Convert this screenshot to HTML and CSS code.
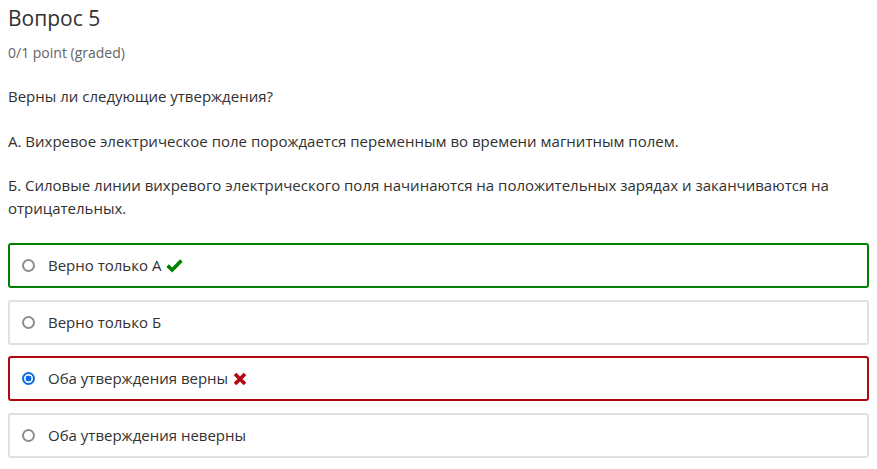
FILE: index.html
```html
<!DOCTYPE html>
<html lang="ru">
<head>
    <meta charset="UTF-8">
    <title>Вопрос 5</title>
    <link rel="stylesheet" href="styles.css">
</head>
<body>
    <div class="problem">
        <h3 class="problem-title">Вопрос 5</h3>
        <div class="problem-progress">0/1 point (graded)</div>

        <p>Верны ли следующие утверждения?</p>
        <p>А. Вихревое электрическое поле порождается переменным во времени магнитным полем.</p>
        <p>Б. Силовые линии вихревого электрического поля начинаются на положительных зарядах и заканчиваются на отрицательных.</p>

        <div class="choices">
            <label class="choice choice-correct">
                <input type="radio" name="q5">
                <span>Верно только А</span>
                <svg class="mark" width="17" height="15" viewBox="0 0 17 15"><path d="M1.6 7.6 L6.2 12 L15.4 2.4" fill="none" stroke="#008100" stroke-width="3.6"/></svg>
            </label>
            <label class="choice">
                <input type="radio" name="q5">
                <span>Верно только Б</span>
            </label>
            <label class="choice choice-incorrect">
                <input type="radio" name="q5" checked>
                <span>Оба утверждения верны</span>
                <svg class="mark" width="14" height="14" viewBox="0 0 14 14"><path d="M2 2 L12 12 M12 2 L2 12" fill="none" stroke="#b20610" stroke-width="3.6"/></svg>
            </label>
            <label class="choice">
                <input type="radio" name="q5">
                <span>Оба утверждения неверны</span>
            </label>
        </div>
    </div>
</body>
</html>
```

FILE: styles.css
```css
body {
    margin: 0;
    padding: 0 8px;
    font-family: "Open Sans", "Noto Sans", sans-serif;
    font-size: 15px;
    line-height: 22.5px;
    color: #313131;
    background: #fff;
}
.problem-title {
    margin: 4px 0 0;
    font-size: 21px;
    font-weight: 400;
    line-height: 28px;
    color: #313131;
}
.problem-progress {
    margin: 10px 0 2px;
    font-size: 14px;
    line-height: 21px;
    color: #646464;
}
p {
    margin: 22px 0 0;
}
.choices {
    margin-top: 24px;
    display: flex;
    flex-direction: column;
    gap: 11.5px;
}
.choice {
    display: flex;
    align-items: center;
    height: 45px;
    box-sizing: border-box;
    padding: 0 12px;
    border: 2px solid #e0e0e0;
    border-radius: 3px;
}
.choice-correct {
    border-color: #008100;
}
.choice-incorrect {
    border-color: #b20610;
}
.choice input {
    appearance: none;
    -webkit-appearance: none;
    box-sizing: border-box;
    margin: 0 13px 0 0;
    width: 13px;
    height: 13px;
    border: 2px solid #8c8c94;
    border-radius: 50%;
    background: #fff;
}
.choice input:checked {
    border-color: #0a6ce0;
    background: radial-gradient(circle, #0a6ce0 0 2.8px, #fff 3.2px);
}
.mark {
    margin-left: 5px;
}
```
